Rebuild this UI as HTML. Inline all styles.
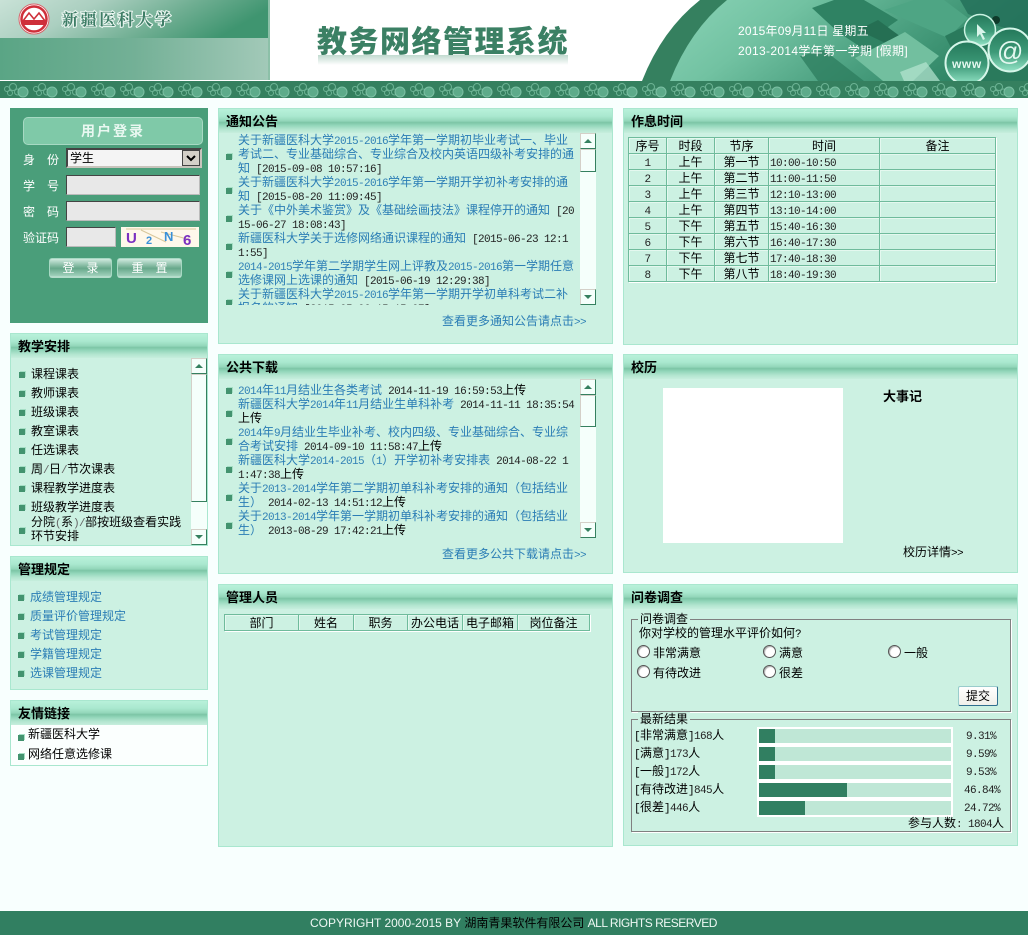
<!DOCTYPE html>
<html lang="zh"><head><meta charset="utf-8"><title>教务网络管理系统</title>
<style>
html,body{margin:0;padding:0;background:#f8fffe}
body{position:relative;width:1028px;height:935px;overflow:hidden;font:12px/14px "WenQuanYi Zen Hei","Noto Sans CJK SC",sans-serif;color:#000}
i{font:normal 11px/14px "Liberation Mono",monospace;letter-spacing:-.6px;color:#222}
a i,.b i{color:#2f80b5}
i.k{color:#000}
i.g{color:#666}
a,.b{color:#2a7db5;text-decoration:none}
.a{position:absolute;white-space:pre}
.p{position:absolute;box-sizing:border-box;border:1px solid #a9e7cf;background:#ccf1e2}
.h{position:absolute;left:0;right:0;top:0;height:24px;background:linear-gradient(#b8f1da 0,#aae8cf 30%,#93d6ba 50%,#7cc5a6 56%,#93d6ba 68%,#b3e6d0 85%,#c6eedd 100%)}
.t{position:absolute;left:7px;top:5px;font-weight:bold;font-size:13px;line-height:14px;color:#000;white-space:pre}
.dot{position:absolute;width:6px;height:6px;background:#43936f;box-shadow:1px -1px 0 #a5dfc5}
.track{position:absolute;width:16px;background:#f5fffb}
.sb{position:absolute;left:0;width:16px;box-sizing:border-box;background:#f5fffb;border:1px solid;border-color:#d4d0c8 #35805f #35805f #d4d0c8}
.up:after,.dn:after{content:"";position:absolute;left:3px;border:4px solid transparent}
.up:after{top:1px;border-bottom:4px solid #35805f}
.dn:after{top:5px;border-top:4px solid #35805f}
.list{position:absolute;overflow:hidden}
.list div{height:14px;white-space:pre}
.lab{position:absolute;color:#fff;white-space:pre;line-height:14px}
.sp{display:inline-block;width:12px}
.in{position:absolute;box-sizing:border-box;background:#e8e8e8;border:1px solid;border-color:#444 #bbb #bbb #444}
.btn{position:absolute;box-sizing:border-box;height:20px;top:258px;border-radius:3px;border:1px solid #a7d8c3;border-bottom:2px solid #b5dccb;background:linear-gradient(#cfe9de,#67a88b 55%,#a0d0bb);color:#fff;text-align:center;line-height:18px;white-space:pre}
table{position:absolute;border-collapse:collapse;table-layout:fixed;background:#ccf1e2;box-shadow:1px 1px 0 #fff}
td{border:1px solid #6fbb9c;box-shadow:inset 1px 1px 0 #e4f8ef;padding:0;text-align:center;font-size:12px;line-height:14px;height:15px;white-space:pre;overflow:hidden}
td i{line-height:10px}
td.m{text-align:left;padding-left:1px}
.fs{position:absolute;box-sizing:border-box;left:631px;width:380px;border:1px solid #808080;box-shadow:1px 1px 0 #fff}
.lg{position:absolute;left:638px;padding:0 2px;background:#ccf1e2;white-space:pre;line-height:14px}
.rd{position:absolute;width:13px;height:13px;box-sizing:border-box;border-radius:50%;background:#fff;border:1px solid #555;box-shadow:inset 1px 1px 1px #aaa,0 0 0 0 #fff}
.bar{position:absolute;left:757px;width:196px;height:18px;box-sizing:border-box;border:2px solid #fff;background:#bfe7d6}
.bar b{display:block;height:14px;background:#317f61}
</style></head><body>

<!-- header -->
<svg class="a" style="left:0;top:0" width="1028" height="98" viewBox="0 0 1028 98">
<defs>
<linearGradient id="g1" x1="0" y1="0" x2="1" y2="0.25"><stop offset="0" stop-color="#c9e2d7"/><stop offset=".35" stop-color="#abcfc0"/><stop offset=".7" stop-color="#6fae92"/><stop offset="1" stop-color="#3f9570"/></linearGradient>
<linearGradient id="g2" x1="0" y1="0" x2="1" y2="0"><stop offset="0" stop-color="#5aa585"/><stop offset=".5" stop-color="#73b096"/><stop offset="1" stop-color="#a2c9b8"/></linearGradient>
<linearGradient id="g3" x1="0" y1="0" x2="1" y2="0.3"><stop offset="0" stop-color="#8ad3b6"/><stop offset=".35" stop-color="#72c2a2"/><stop offset=".7" stop-color="#4a9f7f"/><stop offset="1" stop-color="#2f8565"/></linearGradient>
<linearGradient id="rf" x1="0" y1="0" x2="0" y2="1"><stop offset="0" stop-color="#8dbba7"/><stop offset="1" stop-color="#fff"/></linearGradient>
<linearGradient id="gb" x1="0" y1="0" x2="0" y2="1"><stop offset="0" stop-color="#24785a"/><stop offset=".55" stop-color="#3d9a78"/><stop offset="1" stop-color="#93e4c6"/></linearGradient>
<pattern id="pt" width="29" height="17" patternUnits="userSpaceOnUse" x="0" y="81">
<g fill="none" stroke="#6cb394" stroke-width="1"><circle cx="13" cy="6" r="3.5"/><circle cx="17.5" cy="11" r="3"/><circle cx="10" cy="12" r="2.5"/><circle cx="7" cy="8" r="2.5"/></g>
<circle cx="23" cy="11" r="5" fill="#5dab8a" stroke="#7cc0a4"/>
</pattern>
</defs>
<rect width="1028" height="81" fill="#fff"/>
<rect x="0" y="0" width="268" height="38" fill="url(#g1)"/>
<rect x="0" y="38" width="268" height="42" fill="url(#g2)"/>
<rect x="268" y="0" width="2" height="80" fill="#8cc0a8"/>
<circle cx="34" cy="19" r="15" fill="#fff" stroke="#d8636a" stroke-width="1"/>
<circle cx="34" cy="19" r="12.5" fill="#fff" stroke="#cf2f3a" stroke-width="2.5"/>
<path d="M23 21l6-8 5 6 5-6 6 8z" fill="none" stroke="#cf2f3a" stroke-width="1.6"/>
<rect x="22" y="20" width="24" height="5" fill="#cf2f3a"/>
<text x="62" y="25" font-family="Noto Serif CJK SC,serif" font-size="16" font-weight="bold" letter-spacing="2.6" fill="#3e7d66" stroke="#e6f3ed" stroke-width="2.2" paint-order="stroke">新疆医科大学</text>
<text x="317" y="52" font-family="Noto Sans CJK SC,sans-serif" font-size="30" font-weight="900" letter-spacing="1.5" fill="#3b8064">教务网络管理系统</text>
<rect x="318" y="55" width="250" height="10" fill="url(#rf)" opacity=".55"/>
<path d="M642 81Q662 30 700 0H1028V81Z" fill="#35805f"/>
<path d="M670 81Q690 30 727 0H1028V81Z" fill="url(#g3)"/>
<path d="M812 8l22-8h30l34 20-20 14 18 14-16 12-42-28z" fill="#2f8263"/>
<path d="M858 30l20-10 30 22-8 8z" fill="#256f53"/>
<path d="M800 56l24-6 40 31h-46z" fill="#2c7c5d" opacity=".75"/>
<path d="M905 32l34 24-26 25h-30l-28-23z" fill="#72bf9f"/>
<path d="M884 10l30-10h30l24 18-20 20z" fill="#4ea584"/>
<path d="M945 36l20-10 63 20v35h-60z" fill="#2a7a5c"/>
<path d="M960 0h68v34l-30-8-30-12z" fill="#25715a" opacity=".85"/>
<path d="M900 72l26-10 14 19h-36z" fill="#b6e5d2" opacity=".7"/>
<circle cx="996" cy="20" r="4" fill="#0f3a2a"/>
<circle cx="980" cy="30" r="15.5" fill="url(#gb)" stroke="#c9f3e2" stroke-width="1.5"/>
<path d="M977 24l0 13 3-3 3 6 2-1-3-6 4 0z" fill="#d8f5ea"/>
<circle cx="967" cy="63" r="21.5" fill="url(#gb)" stroke="#d5f6e9" stroke-width="2"/>
<circle cx="1010" cy="50" r="21.5" fill="url(#gb)" stroke="#d5f6e9" stroke-width="2"/>
<text x="952" y="68" font-family="Liberation Sans,sans-serif" font-size="12" font-weight="bold" letter-spacing=".6" fill="#e4f8f0">www</text>
<text x="997" y="60" font-family="Liberation Sans,sans-serif" font-size="26" fill="#e4f8f0">@</text>
<rect y="81" width="1028" height="17" fill="#35805f"/>
<rect y="81" width="1028" height="17" fill="url(#pt)"/>
</svg>
<div class="a" style="left:738px;top:24px;color:#fff;letter-spacing:.2px;font-family:'Liberation Sans','Noto Sans CJK SC',sans-serif">2015年09月11日 星期五</div>
<div class="a" style="left:738px;top:44px;color:#fff;letter-spacing:.33px;font-family:'Liberation Sans','Noto Sans CJK SC',sans-serif">2013-2014学年第一学期 [假期]</div>

<!-- login -->
<div class="a" style="left:10px;top:108px;width:198px;height:215px;background:#4a9e7a"></div>
<div class="a" style="left:23px;top:117px;width:180px;height:28px;box-sizing:border-box;border:1px solid #a7d9c3;border-radius:5px;background:#7fc9a8;color:#e9f8f1;font-weight:bold;font-size:14px;line-height:26px;text-align:center;letter-spacing:2px">用户登录</div>
<div class="lab" style="left:23px;top:153px">身<span class="sp"></span>份</div>
<div class="lab" style="left:23px;top:179px">学<span class="sp"></span>号</div>
<div class="lab" style="left:23px;top:205px">密<span class="sp"></span>码</div>
<div class="lab" style="left:23px;top:231px">验证码</div>
<div class="in" style="left:66px;top:148px;width:136px;height:20px;background:#f4f4f4;border-width:2px 2px 2px 2px;border-color:#444 #c8c4bc #c8c4bc #444;padding:0 0 0 2px;line-height:15px">学生</div>
<div class="a" style="left:182px;top:150px;width:18px;height:16px;box-sizing:border-box;border:1px solid #444;background:#d4d0c8"></div>
<svg class="a" style="left:182px;top:150px" width="18" height="16"><path d="M5 6l4 4 4-4" fill="none" stroke="#000" stroke-width="2"/></svg>
<div class="in" style="left:66px;top:175px;width:134px;height:20px"></div>
<div class="in" style="left:66px;top:201px;width:134px;height:20px"></div>
<div class="in" style="left:66px;top:227px;width:50px;height:20px"></div>
<svg class="a" style="left:121px;top:227px" width="78" height="20"><rect width="78" height="20" fill="#fff8ea"/><path d="M20 3l25 12M40 5l30 8M5 2h70" stroke="#d8c79a" fill="none"/><text x="5" y="16" font-family="Liberation Sans,sans-serif" font-weight="bold" font-size="15" fill="#7b30c0">U</text><text x="25" y="17" font-family="Liberation Sans,sans-serif" font-weight="bold" font-size="11" fill="#3a90d8">2</text><text x="43" y="14" font-family="Liberation Sans,sans-serif" font-weight="bold" font-size="13" fill="#3a90d8">N</text><text x="62" y="18" font-family="Liberation Sans,sans-serif" font-weight="bold" font-size="15" fill="#7b30c0">6</text></svg>
<div class="btn" style="left:49px;width:63px">登<span class="sp"></span>录</div>
<div class="btn" style="left:117px;width:65px">重<span class="sp"></span>置</div>

<!-- 教学安排 -->
<div class="p" style="left:10px;top:333px;width:198px;height:213px"><div class="h"></div><div class="t">教学安排</div></div>
<div class="list" style="left:31px;top:367px;width:156px;height:177px;color:#000">
<div style="height:19px">课程课表</div><div style="height:19px">教师课表</div><div style="height:19px">班级课表</div><div style="height:19px">教室课表</div><div style="height:19px">任选课表</div><div style="height:19px">周<i class="g">/</i>日<i class="g">/</i>节次课表</div><div style="height:19px">课程教学进度表</div><div style="height:15px">班级教学进度表</div><div>分院<i class="g">(</i>系<i class="g">)/</i>部按班级查看实践</div><div>环节安排</div></div>
<div class="dot" style="left:19px;top:372px"></div><div class="dot" style="left:19px;top:391px"></div><div class="dot" style="left:19px;top:410px"></div><div class="dot" style="left:19px;top:429px"></div><div class="dot" style="left:19px;top:448px"></div><div class="dot" style="left:19px;top:467px"></div><div class="dot" style="left:19px;top:486px"></div><div class="dot" style="left:19px;top:505px"></div><div class="dot" style="left:19px;top:528px"></div>
<div class="track" style="left:191px;top:358px;height:187px"><div class="sb up" style="top:0;height:16px"></div><div class="sb" style="top:16px;height:128px"></div><div class="sb dn" style="top:171px;height:16px"></div></div>

<!-- 管理规定 -->
<div class="p" style="left:10px;top:556px;width:198px;height:134px"><div class="h"></div><div class="t">管理规定</div></div>
<div class="list b" style="left:30px;top:590px;width:170px;height:95px"><div style="height:19px">成绩管理规定</div><div style="height:19px">质量评价管理规定</div><div style="height:19px">考试管理规定</div><div style="height:19px">学籍管理规定</div><div style="height:19px">选课管理规定</div></div>
<div class="dot" style="left:18px;top:595px"></div><div class="dot" style="left:18px;top:614px"></div><div class="dot" style="left:18px;top:633px"></div><div class="dot" style="left:18px;top:652px"></div><div class="dot" style="left:18px;top:671px"></div>

<!-- 友情链接 -->
<div class="p" style="left:10px;top:700px;width:198px;height:66px;background:#fbfffe"><div class="h"></div><div class="t">友情链接</div></div>
<div class="list" style="left:28px;top:727px;width:170px;height:36px"><div style="height:20px">新疆医科大学</div><div>网络任意选修课</div></div>
<div class="dot" style="left:18px;top:735px"></div><div class="dot" style="left:18px;top:754px"></div>

<!-- 通知公告 -->
<div class="p" style="left:218px;top:108px;width:395px;height:236px"><div class="h"></div><div class="t">通知公告</div></div>
<div class="list" style="left:238px;top:133px;width:340px;height:172px">
<div class="b">关于新疆医科大学<i>2015-2016</i>学年第一学期初毕业考试一、毕业</div>
<div class="b">考试二、专业基础综合、专业综合及校内英语四级补考安排的通</div>
<div><span class="b">知</span><i> [2015-09-08 10:57:16]</i></div>
<div class="b">关于新疆医科大学<i>2015-2016</i>学年第一学期开学初补考安排的通</div>
<div><span class="b">知</span><i> [2015-08-20 11:09:45]</i></div>
<div><span class="b">关于《中外美术鉴赏》及《基础绘画技法》课程停开的通知</span><i> [20</i></div>
<div><i>15-06-27 18:08:43]</i></div>
<div><span class="b">新疆医科大学关于选修网络通识课程的通知</span><i> [2015-06-23 12:1</i></div>
<div><i>1:55]</i></div>
<div class="b"><i>2014-2015</i>学年第二学期学生网上评教及<i>2015-2016</i>第一学期任意</div>
<div><span class="b">选修课网上选课的通知</span><i> [2015-06-19 12:29:38]</i></div>
<div class="b">关于新疆医科大学<i>2015-2016</i>学年第一学期开学初单科考试二补</div>
<div><span class="b">报名的通知</span><i> [2015-05-06 15:15:07]</i></div>
</div>
<div class="dot" style="left:226px;top:154px"></div><div class="dot" style="left:226px;top:188px"></div><div class="dot" style="left:226px;top:216px"></div><div class="dot" style="left:226px;top:244px"></div><div class="dot" style="left:226px;top:272px"></div><div class="dot" style="left:226px;top:300px;height:5px"></div>
<div class="track" style="left:580px;top:133px;height:172px"><div class="sb up" style="top:0;height:16px"></div><div class="sb" style="top:16px;height:23px"></div><div class="sb dn" style="top:156px;height:16px"></div></div>
<a class="a" style="left:442px;top:314px">查看更多通知公告请点击<i>&gt;&gt;</i></a>

<!-- 公共下载 -->
<div class="p" style="left:218px;top:354px;width:395px;height:220px"><div class="h"></div><div class="t">公共下载</div></div>
<div class="list" style="left:238px;top:383px;width:340px;height:154px">
<div><span class="b"><i>2014</i>年<i>11</i>月结业生各类考试</span><i> 2014-11-19 16:59:53</i>上传</div>
<div><span class="b">新疆医科大学<i>2014</i>年<i>11</i>月结业生单科补考</span><i> 2014-11-11 18:35:54</i></div>
<div>上传</div>
<div class="b"><i>2014</i>年<i>9</i>月结业生毕业补考、校内四级、专业基础综合、专业综</div>
<div><span class="b">合考试安排</span><i> 2014-09-10 11:58:47</i>上传</div>
<div><span class="b">新疆医科大学<i>2014-2015</i>（<i>1</i>）开学初补考安排表</span><i> 2014-08-22 1</i></div>
<div><i>1:47:38</i>上传</div>
<div class="b">关于<i>2013-2014</i>学年第二学期初单科补考安排的通知（包括结业</div>
<div><span class="b">生）</span><i> 2014-02-13 14:51:12</i>上传</div>
<div class="b">关于<i>2013-2014</i>学年第一学期初单科补考安排的通知（包括结业</div>
<div><span class="b">生）</span><i> 2013-08-29 17:42:21</i>上传</div>
</div>
<div class="dot" style="left:226px;top:388px"></div><div class="dot" style="left:226px;top:411px"></div><div class="dot" style="left:226px;top:439px"></div><div class="dot" style="left:226px;top:467px"></div><div class="dot" style="left:226px;top:495px"></div><div class="dot" style="left:226px;top:523px"></div>
<div class="track" style="left:580px;top:379px;height:159px"><div class="sb up" style="top:0;height:16px"></div><div class="sb" style="top:16px;height:32px"></div><div class="sb dn" style="top:143px;height:16px"></div></div>
<a class="a" style="left:442px;top:547px">查看更多公共下载请点击<i>&gt;&gt;</i></a>

<!-- 管理人员 -->
<div class="p" style="left:218px;top:584px;width:395px;height:263px"><div class="h"></div><div class="t">管理人员</div></div>
<table style="left:224px;top:614px;width:365px"><colgroup><col style="width:74px"><col style="width:55px"><col style="width:54px"><col style="width:55px"><col style="width:55px"><col style="width:72px"></colgroup>
<tr><td>部门</td><td>姓名</td><td>职务</td><td>办公电话</td><td>电子邮箱</td><td>岗位备注</td></tr></table>

<!-- 作息时间 -->
<div class="p" style="left:623px;top:108px;width:395px;height:237px"><div class="h"></div><div class="t">作息时间</div></div>
<table style="left:628px;top:137px;width:367px"><colgroup><col style="width:38px"><col style="width:48px"><col style="width:54px"><col style="width:111px"><col style="width:116px"></colgroup>
<tr><td>序号</td><td>时段</td><td>节序</td><td>时间</td><td>备注</td></tr>
<tr><td><i>1</i></td><td>上午</td><td>第一节</td><td class="m"><i>10:00-10:50</i></td><td></td></tr>
<tr><td><i>2</i></td><td>上午</td><td>第二节</td><td class="m"><i>11:00-11:50</i></td><td></td></tr>
<tr><td><i>3</i></td><td>上午</td><td>第三节</td><td class="m"><i>12:10-13:00</i></td><td></td></tr>
<tr><td><i>4</i></td><td>上午</td><td>第四节</td><td class="m"><i>13:10-14:00</i></td><td></td></tr>
<tr><td><i>5</i></td><td>下午</td><td>第五节</td><td class="m"><i>15:40-16:30</i></td><td></td></tr>
<tr><td><i>6</i></td><td>下午</td><td>第六节</td><td class="m"><i>16:40-17:30</i></td><td></td></tr>
<tr><td><i>7</i></td><td>下午</td><td>第七节</td><td class="m"><i>17:40-18:30</i></td><td></td></tr>
<tr><td><i>8</i></td><td>下午</td><td>第八节</td><td class="m"><i>18:40-19:30</i></td><td></td></tr>
</table>

<!-- 校历 -->
<div class="p" style="left:623px;top:354px;width:395px;height:219px"><div class="h"></div><div class="t">校历</div></div>
<div class="a" style="left:663px;top:388px;width:180px;height:155px;background:#fff"></div>
<div class="a" style="left:883px;top:389px;font-weight:bold;font-size:13px">大事记</div>
<div class="a" style="left:903px;top:545px">校历详情<i class="k">&gt;&gt;</i></div>

<!-- 问卷调查 -->
<div class="p" style="left:623px;top:584px;width:395px;height:262px"><div class="h"></div><div class="t">问卷调查</div></div>
<div class="fs" style="top:619px;height:93px"></div>
<div class="lg" style="top:612px">问卷调查</div>
<div class="a" style="left:639px;top:626px">你对学校的管理水平评价如何<i class="k">?</i></div>
<div class="rd" style="left:637px;top:645px"></div><div class="a" style="left:653px;top:646px">非常满意</div>
<div class="rd" style="left:763px;top:645px"></div><div class="a" style="left:779px;top:646px">满意</div>
<div class="rd" style="left:888px;top:645px"></div><div class="a" style="left:904px;top:646px">一般</div>
<div class="rd" style="left:637px;top:665px"></div><div class="a" style="left:653px;top:666px">有待改进</div>
<div class="rd" style="left:763px;top:665px"></div><div class="a" style="left:779px;top:666px">很差</div>
<div class="a" style="left:958px;top:686px;width:40px;height:20px;box-sizing:border-box;border:1px solid;border-color:#9cc #2f6f8f #2f6f8f #9cc;border-radius:2px;background:linear-gradient(#fff,#f0f0ea);text-align:center;line-height:18px">提交</div>
<div class="fs" style="top:719px;height:113px"></div>
<div class="lg" style="top:712px">最新结果</div>
<div class="a" style="left:634px;top:728px"><i class="k">[</i>非常满意<i class="k">]</i><i>168</i>人</div>
<div class="a" style="left:634px;top:746px"><i class="k">[</i>满意<i class="k">]</i><i>173</i>人</div>
<div class="a" style="left:634px;top:764px"><i class="k">[</i>一般<i class="k">]</i><i>172</i>人</div>
<div class="a" style="left:634px;top:782px"><i class="k">[</i>有待改进<i class="k">]</i><i>845</i>人</div>
<div class="a" style="left:634px;top:800px"><i class="k">[</i>很差<i class="k">]</i><i>446</i>人</div>
<div class="bar" style="top:727px"><b style="width:16px"></b></div>
<div class="bar" style="top:745px"><b style="width:16px"></b></div>
<div class="bar" style="top:763px"><b style="width:16px"></b></div>
<div class="bar" style="top:781px"><b style="width:88px"></b></div>
<div class="bar" style="top:799px"><b style="width:46px"></b></div>
<div class="a" style="left:966px;top:728px"><i>9.31%</i></div>
<div class="a" style="left:966px;top:746px"><i>9.59%</i></div>
<div class="a" style="left:966px;top:764px"><i>9.53%</i></div>
<div class="a" style="left:964px;top:782px"><i>46.84%</i></div>
<div class="a" style="left:964px;top:800px"><i>24.72%</i></div>
<div class="a" style="left:908px;top:816px">参与人数<i>: 1804</i>人</div>

<!-- footer -->
<div class="a" style="left:0;top:911px;width:1028px;height:24px;background:#317f61"></div>
<div class="a" style="left:310px;top:916px;color:#eef8f4;font-family:'Liberation Sans','Noto Sans CJK SC',sans-serif">COPYRIGHT 2000-2015 BY <span style="color:#000">湖南青果软件有限公司</span> <span style="letter-spacing:-.5px">ALL RIGHTS RESERVED</span></div>
</body></html>
